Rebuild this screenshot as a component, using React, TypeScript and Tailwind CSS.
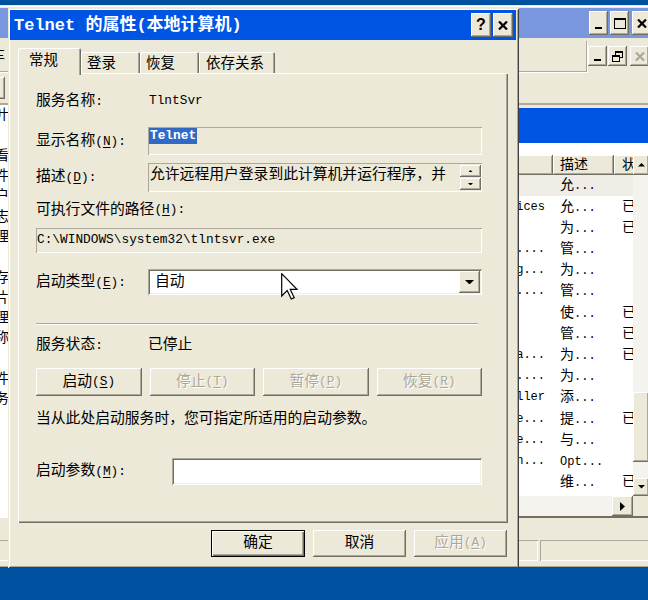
import React from "react";

const FONT = "font-['Liberation_Mono','Noto_Sans_CJK_SC',monospace]";
const raised =
  "bg-[#ece9d8] shadow-[inset_-1px_-1px_0_#716f64,inset_1px_1px_0_#ffffff,inset_-2px_-2px_0_#aca899]";
const sunken2 =
  "shadow-[inset_1px_1px_0_#aca899,inset_-1px_-1px_0_#ffffff,inset_2px_2px_0_#716f64,inset_-2px_-2px_0_#f1efe2]";
const sunken1 = "shadow-[inset_1px_1px_0_#aca899,inset_-1px_-1px_0_#ffffff]";
const dis = "text-[#aca899] [text-shadow:1px_1px_0_#ffffff]";

function K({ k }: { k: string }) {
  return (
    <span className="text-[12.8px]">
      (<span className="underline underline-offset-[2px]">{k}</span>)
    </span>
  );
}

function Colon() {
  return <span className="text-[12.8px]">:</span>;
}

function Btn({
  children,
  disabled,
  def,
  className = "",
}: {
  children: React.ReactNode;
  disabled?: boolean;
  def?: boolean;
  className?: string;
}) {
  return (
    <div
      className={`flex items-center justify-center text-[14.8px] leading-none ${
        def
          ? "bg-[#ece9d8] shadow-[inset_1px_1px_0_#000000,inset_-1px_-1px_0_#000000,inset_2px_2px_0_#ffffff,inset_-2px_-2px_0_#716f64,inset_-3px_-3px_0_#aca899]"
          : raised
      } ${disabled ? dis : "text-black"} ${className}`}
    >
      {children}
    </div>
  );
}

function XIcon({ color = "#000" }: { color?: string }) {
  return (
    <svg width="10" height="9" viewBox="0 0 10 9">
      <path d="M1 0.5 L9 8.5 M9 0.5 L1 8.5" stroke={color} strokeWidth="2.2" />
    </svg>
  );
}

function MinIcon() {
  return (
    <svg width="10" height="10" viewBox="0 0 10 10">
      <rect x="1" y="7" width="7" height="2" fill="#000" />
    </svg>
  );
}

function MaxIcon() {
  return (
    <svg width="12" height="11" viewBox="0 0 12 11">
      <rect x="0.5" y="0.5" width="11" height="10" fill="none" stroke="#000" />
      <rect x="0" y="0" width="12" height="2" fill="#000" />
    </svg>
  );
}

function RestoreIcon() {
  return (
    <svg width="11" height="11" viewBox="0 0 11 11">
      <rect x="3.5" y="0.5" width="7" height="6" fill="none" stroke="#000" />
      <rect x="3" y="0" width="8" height="2" fill="#000" />
      <rect x="0.5" y="4.5" width="7" height="6" fill="#ece9d8" stroke="#000" />
      <rect x="0" y="4" width="8" height="2" fill="#000" />
    </svg>
  );
}

function Tri({ up, size = 8 }: { up?: boolean; size?: number }) {
  const h = size / 2;
  return (
    <svg width={size} height={h} viewBox={`0 0 ${size} ${h}`}>
      <path d={up ? `M0 ${h} L${size / 2} 0 L${size} ${h} Z` : `M0 0 L${size} 0 L${size / 2} ${h} Z`} fill="#000" />
    </svg>
  );
}

function TriRight() {
  return (
    <svg width="5" height="9" viewBox="0 0 5 9">
      <path d="M0 0 L5 4.5 L0 9 Z" fill="#000" />
    </svg>
  );
}

const tree = ["叶", "", "看", "件", "户", "志", "理", "", "存", "片", "理", "称", "", "件", "务"];

const rows: { n: string; d: string; dm?: boolean; s: string }[] = [
  { n: "", d: "允", s: "" },
  { n: "Application Layer Gateway Services", d: "允", s: "已" },
  { n: "", d: "为", s: "已" },
  { n: "COM+ System Ap....", d: "管", s: "" },
  { n: "Computer Browsing...", d: "为", s: "" },
  { n: "Distributed Tra....", d: "管", s: "" },
  { n: "", d: "使", s: "已" },
  { n: "", d: "管", s: "已" },
  { n: "Help and Support Area...", d: "为", s: "已" },
  { n: "Indexing Servi....", d: "为", s: "" },
  { n: "Logical Disk Manager Controller", d: "添", s: "" },
  { n: "Network Location Service...", d: "提", s: "已" },
  { n: "Performance Logs and Service...", d: "与", s: "" },
  { n: "Remote Registry Configuration...", d: "Opt", dm: true, s: "" },
  { n: "", d: "维", s: "已" },
];

function BgWindow() {
  return (
    <div className="absolute left-[-20px] top-[5px] w-[674px] h-[563px] bg-[#ece9d8] pt-[3px] pl-[3px] pr-[3px] pb-[5px] flex flex-col shadow-[inset_-1px_-1px_0_#404040,inset_1px_1px_0_#ece9d8,inset_-2px_-2px_0_#aca899,inset_2px_2px_0_#ffffff]">
      {/* title bar */}
      <div className="h-[30px] bg-[#7a96df] flex items-center justify-end gap-[2px]">
        <div className={`${raised} w-[19px] h-[24px] flex items-end justify-center pb-[5px]`}>
          <MinIcon />
        </div>
        <div className={`${raised} w-[19px] h-[24px] flex items-center justify-center`}>
          <MaxIcon />
        </div>
        <div className={`${raised} w-[19px] h-[24px] flex items-center justify-center ml-[1px]`}>
          <XIcon />
        </div>
      </div>
      {/* menu bar */}
      <div className="h-[34px] flex">
        <div className="flex-1 mt-[3px] border-r border-b border-r-[#aca899] border-b-[#aca899] shadow-[1px_1px_0_#ffffff] flex items-center pl-[8px] text-[14px]">
          车
        </div>
        <div className="w-[64px] flex items-center justify-end gap-[1px] pr-[2px] pt-[2px]">
          <div className={`${raised} w-[19px] h-[20px] flex items-end justify-center pb-[4px]`}>
            <MinIcon />
          </div>
          <div className={`${raised} w-[19px] h-[20px] flex items-center justify-center`}>
            <RestoreIcon />
          </div>
          <div className={`${raised} w-[19px] h-[20px] flex items-center justify-center ml-[2px]`}>
            <XIcon color="#aca899" />
          </div>
        </div>
      </div>
      {/* toolbar */}
      <div className="h-[33px] flex items-center border-b-2 border-b-[#aca899]">
        <div className={`${raised} ml-[2px] w-[20px] h-[22px]`} />
      </div>
      {/* content */}
      <div className="h-[413px] flex">
        <div className="w-[200px] bg-white flex flex-col pl-[12px] text-[14px] leading-none overflow-hidden">
          {tree.map((t, i) => (
            <div key={i} className="h-[20.3px] flex items-center shrink-0">
              {t}
            </div>
          ))}
        </div>
        <div className="w-[4px]" />
        <div className="flex-1 min-w-0 flex flex-col mr-[2px]">
          <div className="h-[3px]" />
          <div className="h-[35px] bg-[#0054e3]" />
          <div className="h-[12px] bg-white" />
          <div className="h-[342px] flex">
            <div className="flex-1 min-w-0 overflow-hidden bg-white flex flex-col">
              <div className="h-[20px] flex shrink-0 text-[14px] leading-none">
                <div className={`${raised} w-[366px] shrink-0`} />
                <div className={`${raised} w-[61px] shrink-0 flex items-center pl-[7px]`}>描述</div>
                <div className={`${raised} w-[80px] shrink-0 flex items-center pl-[8px]`}>状</div>
              </div>
              {rows.map((r, i) => (
                <div
                  key={i}
                  className={`h-[21.2px] flex shrink-0 items-center text-[14px] leading-none ${
                    i === 0 ? "bg-[#efede6]" : ""
                  }`}
                >
                  <div className="w-[366px] shrink-0 text-right pr-[8px] text-[12px] whitespace-nowrap overflow-hidden">
                    {r.n}
                  </div>
                  <div className="w-[61px] shrink-0 pl-[7px] whitespace-nowrap">
                    {r.dm ? <span className="text-[12px]">{r.d}</span> : r.d}
                    <span className="text-[12px]">...</span>
                  </div>
                  <div className="w-[80px] shrink-0 pl-[8px]">{r.s}</div>
                </div>
              ))}
            </div>
            <div className="w-[16px] flex flex-col bg-[#f4f3ee]">
              <div className={`${raised} h-[20px] flex items-center justify-center`}>
                <Tri up size={7} />
              </div>
              <div className="flex-1" />
              <div className={`${raised} h-[70px]`} />
              <div className="h-[16px]" />
              <div className={`${raised} h-[18px] flex items-center justify-center`}>
                <Tri size={7} />
              </div>
            </div>
          </div>
          <div className="h-[20px] flex">
            <div className="flex-1 bg-[#f4f3ee]" />
            <div className={`${raised} w-[21px] flex items-center justify-center`}>
              <TriRight />
            </div>
            <div className="w-[16px] bg-[#ece9d8]" />
          </div>
          <div className="h-[2px] bg-[#716f64]" />
        </div>
      </div>
      {/* bottom tabs area */}
      <div className="h-[22px]" />
      {/* status bar */}
      <div className="h-[21px] flex gap-[2px]">
        <div className={`${sunken1} w-[555px]`} />
        <div className={`${sunken1} flex-1`} />
      </div>
    </div>
  );
}

const tabShadow =
  "shadow-[inset_1px_1px_0_#ffffff,inset_-1px_0_0_#716f64,inset_-2px_0_0_#aca899]";

function Dialog() {
  return (
    <div className="absolute left-[8px] top-[8px] w-[511px] h-[560px] bg-[#ece9d8] pt-[2px] pl-[2px] pr-[3px] flex flex-col shadow-[inset_1px_1px_0_#ece9d8,inset_-1px_-1px_0_#404040,inset_2px_2px_0_#ffffff,inset_-2px_-2px_0_#aca899]">
      <div className="h-[30px] bg-[#0054e3] flex items-center pl-[4px] pr-[3px]">
        <span className="flex-1 text-white font-bold text-[17px] leading-none whitespace-nowrap">
          Telnet 的属性(本地计算机)
        </span>
        <div className="flex gap-[2px]">
          <div className={`${raised} w-[20px] h-[24px] flex items-center justify-center font-bold text-[16px] leading-none font-['Liberation_Sans',sans-serif]`}>
            ?
          </div>
          <div className={`${raised} w-[20px] h-[24px] flex items-center justify-center`}>
            <XIcon />
          </div>
        </div>
      </div>
      <div className="flex flex-col px-[8px]">
        <div className="mt-[8px] h-[27px] flex items-end text-[14.5px] leading-[18px]">
          <div className={`relative z-10 w-[63px] h-[27px] bg-[#ece9d8] flex pl-[11px] pt-[4px] rounded-t-[2px] ${tabShadow}`}>
            常规
          </div>
          <div className={`w-[59px] h-[21px] mb-[2px] flex pl-[6px] pt-[3px] rounded-t-[2px] ${tabShadow}`}>
            登录
          </div>
          <div className={`w-[59px] h-[21px] mb-[2px] flex pl-[6px] pt-[3px] rounded-t-[2px] ${tabShadow}`}>
            恢复
          </div>
          <div className={`w-[76px] h-[21px] mb-[2px] flex pl-[7px] pt-[3px] rounded-t-[2px] ${tabShadow}`}>
            依存关系
          </div>
        </div>
        <div className="relative -mt-[2px] h-[450px] flex flex-col pl-[18px] pr-[26px] pt-[14px] text-[14.8px] leading-none shadow-[inset_1px_1px_0_#ffffff,inset_-1px_-1px_0_#716f64,inset_-2px_-2px_0_#aca899]">
          {/* 服务名称 */}
          <div className="h-[28px] flex items-center">
            <div className="w-[112px] shrink-0">
              服务名称<Colon />
            </div>
            <span className="text-[12.8px] pl-[1px]">TlntSvr</span>
          </div>
          {/* 显示名称 */}
          <div className="mt-[12px] h-[28px] flex items-center">
            <div className="w-[112px] shrink-0">
              显示名称<K k="N" />
              <Colon />
            </div>
            <div className={`flex-1 h-full ${sunken1} pt-[1px] pl-[1px]`}>
              <span className="inline-block bg-[#316ac5] text-white text-[12.8px] leading-[16px] px-[1px] font-bold">
                Telnet
              </span>
            </div>
          </div>
          {/* 描述 */}
          <div className="mt-[8px] h-[29px] flex items-center">
            <div className="w-[112px] shrink-0">
              描述<K k="D" />
              <Colon />
            </div>
            <div className={`flex-1 h-full ${sunken1} flex`}>
              <div className="flex-1 pl-[2px] pt-[5px] whitespace-nowrap overflow-hidden">
                允许远程用户登录到此计算机并运行程序，并
              </div>
              <div className="w-[21px] flex flex-col gap-[1px] py-[2px] mr-[1px]">
                <div className={`${raised} flex-1 flex items-center justify-center`}>
                  <Tri up size={5} />
                </div>
                <div className={`${raised} flex-1 flex items-center justify-center`}>
                  <Tri size={5} />
                </div>
              </div>
            </div>
          </div>
          {/* path label */}
          <div className="mt-[8px] h-[20px] flex items-center">
            可执行文件的路径<K k="H" />
            <Colon />
          </div>
          <div className={`mt-[8px] h-[25px] ${sunken1} flex items-center pl-[1px] text-[12.8px] whitespace-nowrap`}>
            C:\WINDOWS\system32\tlntsvr.exe
          </div>
          {/* 启动类型 */}
          <div className="mt-[16px] h-[26px] flex items-center">
            <div className="w-[112px] shrink-0">
              启动类型<K k="E" />
              <Colon />
            </div>
            <div className={`flex-1 h-full bg-white ${sunken2} flex items-center p-[2px]`}>
              <span className="flex-1 pl-[5px]">自动</span>
              <div className={`${raised} w-[21px] h-full flex items-center justify-center`}>
                <Tri size={9} />
              </div>
            </div>
          </div>
          {/* separator */}
          <div className="mt-[28px] mr-[4px] h-[2px] border-t border-t-[#aca899] border-b border-b-white" />
          {/* 服务状态 */}
          <div className="mt-[10px] h-[20px] flex items-center">
            <div className="w-[112px] shrink-0">
              服务状态<Colon />
            </div>
            <span>已停止</span>
          </div>
          {/* buttons */}
          <div className="mt-[13px] h-[28px] grid grid-cols-4 gap-[8px]">
            <Btn>
              启动<K k="S" />
            </Btn>
            <Btn disabled>
              停止<K k="T" />
            </Btn>
            <Btn disabled>
              暂停<K k="P" />
            </Btn>
            <Btn disabled>
              恢复<K k="R" />
            </Btn>
          </div>
          <div className="mt-[13px] h-[20px] flex items-center whitespace-nowrap">
            当从此处启动服务时，您可指定所适用的启动参数。
          </div>
          {/* 启动参数 */}
          <div className="mt-[29px] h-[27px] flex items-center">
            <div className="w-[136px] shrink-0">
              启动参数<K k="M" />
              <Colon />
            </div>
            <div className={`flex-1 h-full bg-white ${sunken2}`} />
          </div>
        </div>
        <div className="mt-[7px] h-[27px] flex justify-end gap-[8px] pr-[1px]">
          <Btn def className="w-[94px]">
            确定
          </Btn>
          <Btn className="w-[93px]">取消</Btn>
          <Btn disabled className="w-[93px]">
            应用<K k="A" />
          </Btn>
        </div>
      </div>
    </div>
  );
}

function Cursor() {
  return (
    <svg
      className="absolute left-[281px] top-[273px]"
      width="17"
      height="28"
      viewBox="0 0 17 28"
    >
      <path
        d="M0.7 0.7 L0.7 23 L6.2 17.5 L10.3 26 L13.2 24.6 L9.2 16.3 L16 16.3 Z"
        fill="#ffffff"
        stroke="#000000"
        strokeWidth="1.2"
        strokeLinejoin="miter"
      />
    </svg>
  );
}

export default function App() {
  return (
    <div className={`relative w-[648px] h-[600px] overflow-hidden bg-[#0050a0] text-black ${FONT}`}>
      <BgWindow />
      <Dialog />
      <Cursor />
    </div>
  );
}
